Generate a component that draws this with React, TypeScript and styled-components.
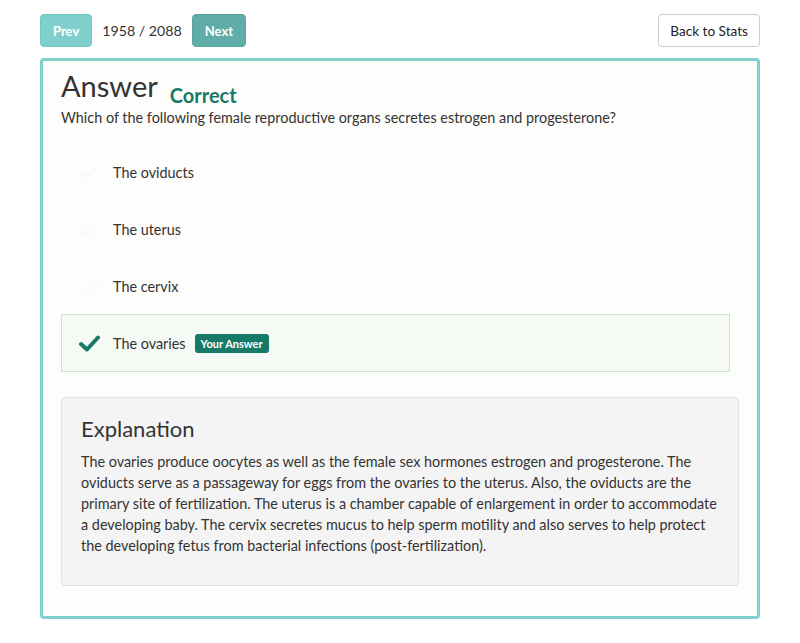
import React from "react";
import styled, { createGlobalStyle } from "styled-components";

const Global = createGlobalStyle`
  html, body { margin: 0; padding: 0; background: #ffffff; }
  body { font-family: Lato, "Open Sans", sans-serif; color: #333; }
  * { box-sizing: border-box; }
`;

const Page = styled.div`
  padding: 14px 40px 0 40px;
  width: 800px;
`;

const TopBar = styled.div`
  display: flex;
  align-items: center;
  height: 33px;
`;

const NavButton = styled.button<{ $dark?: boolean }>`
  height: 33px;
  padding: 0 12px;
  border-radius: 4px;
  border: 1px solid ${(p) => (p.$dark ? "#5aa5a2" : "#74c6c3")};
  background: ${(p) => (p.$dark ? "#5faca8" : "#7fd0cc")};
  color: #fff;
  font-family: Lato, sans-serif;
  font-weight: 700;
  font-size: 13px;
`;

const Counter = styled.span`
  margin: 0 10px;
  font-size: 14.2px;
  color: #333;
`;

const Spacer = styled.div`
  flex: 1;
`;

const BackButton = styled.button`
  height: 33px;
  padding: 0 11px;
  border-radius: 4px;
  border: 1px solid #cccccc;
  background: #fff;
  color: #222;
  font-family: Lato, sans-serif;
  font-size: 13.6px;
`;

const Card = styled.div`
  margin-top: 11px;
  border: 3px solid #7fcfcb;
  border-radius: 4px;
  background: #fdfdfb;
  padding: 7px 18px 31px 18px;
  height: 561px;
`;

const HeadingRow = styled.div`
  display: flex;
  align-items: flex-end;
  gap: 12px;
`;

const Heading = styled.h1`
  margin: 0;
  font-size: 29px;
  line-height: 35px;
  font-weight: 400;
  color: #333;
`;

const Status = styled.span`
  font-size: 20px;
  font-weight: 700;
  color: #177a68;
  line-height: 24px;
  margin-bottom: -4px;
`;

const Question = styled.p`
  margin: 5px 0 0 0;
  font-size: 14.4px;
  line-height: 20px;
  color: #333;
`;

const Choices = styled.div`
  margin: 16px 9px 0 0;
  display: flex;
  flex-direction: column;
`;

const Choice = styled.div<{ $correct?: boolean }>`
  height: 58px;
  margin-top: -1px;
  display: flex;
  align-items: center;
  padding-left: 16px;
  font-size: 14.4px;
  color: #333;
  border: 1px solid ${(p) => (p.$correct ? "#c9e6c2" : "transparent")};
  background: ${(p) => (p.$correct ? "#f5faf4" : "transparent")};
`;

const Mark = styled.span`
  width: 22px;
  height: 20px;
  margin-right: 13px;
  display: flex;
  align-items: center;
  justify-content: center;
`;

const Badge = styled.span`
  margin-left: 9px;
  background: #177a68;
  color: #fff;
  font-weight: 700;
  font-size: 11px;
  line-height: 19px;
  padding: 0 6px;
  border-radius: 3px;
`;

const Explanation = styled.div`
  margin-top: 25px;
  background: #f4f4f4;
  border: 1px solid #e2e2e2;
  border-radius: 4px;
  padding: 15px 19px 28px 19px;
  height: 189px;
`;

const ExplTitle = styled.h3`
  margin: 0;
  font-size: 22px;
  font-weight: 400;
  line-height: 32px;
  color: #333;
`;

const ExplText = styled.p`
  margin: 6px 0 0 0;
  font-size: 14.4px;
  line-height: 21px;
  color: #333;
`;

const Check = ({ color }: { color: string }) => (
  <svg width="21" height="17" viewBox="0 0 21 17">
    <path d="M2 9 L8 14.5 L19 2.5" fill="none" stroke={color} strokeWidth="4" strokeLinecap="round" strokeLinejoin="round" />
  </svg>
);

const choices = ["The oviducts", "The uterus", "The cervix", "The ovaries"];

export default function App() {
  return (
    <Page>
      <Global />
      <TopBar>
        <NavButton>Prev</NavButton>
        <Counter>1958 / 2088</Counter>
        <NavButton $dark>Next</NavButton>
        <Spacer />
        <BackButton>Back to Stats</BackButton>
      </TopBar>
      <Card>
        <HeadingRow>
          <Heading>Answer</Heading>
          <Status>Correct</Status>
        </HeadingRow>
        <Question>Which of the following female reproductive organs secretes estrogen and progesterone?</Question>
        <Choices>
          {choices.map((c, i) => {
            const correct = i === 3;
            return (
              <Choice key={c} $correct={correct}>
                <Mark>
                  <Check color={correct ? "#177a68" : "#fafaf8"} />
                </Mark>
                {c}
                {correct && <Badge>Your Answer</Badge>}
              </Choice>
            );
          })}
        </Choices>
        <Explanation>
          <ExplTitle>Explanation</ExplTitle>
          <ExplText>
            The ovaries produce oocytes as well as the female sex hormones estrogen and progesterone. The oviducts serve as a passageway for eggs from the ovaries to the uterus. Also, the oviducts are the primary site of fertilization. The uterus is a chamber capable of enlargement in order to accommodate a developing baby. The cervix secretes mucus to help sperm motility and also serves to help protect the developing fetus from bacterial infections (post-fertilization).
          </ExplText>
        </Explanation>
      </Card>
    </Page>
  );
}
